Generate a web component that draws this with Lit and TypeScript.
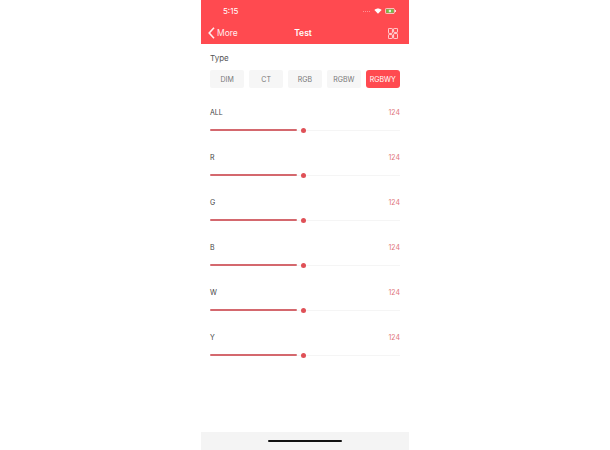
import { LitElement, html, css, svg } from "lit";
import { customElement } from "lit/decorators.js";

const TYPES = ["DIM", "CT", "RGB", "RGBW", "RGBWY"];
const CHANNELS = ["ALL", "R", "G", "B", "W", "Y"];

@customElement("app-root")
export class AppRoot extends LitElement {
  static styles = css`
    :host {
      display: flex;
      justify-content: center;
      width: 610px;
      height: 450px;
      background: #fff;
      font-family: "Inter", "Liberation Sans", sans-serif;
      overflow: hidden;
    }
    .phone {
      width: 208px;
      height: 450px;
      display: flex;
      flex-direction: column;
      background: #fff;
    }
    .head {
      background: #ff4a50;
      height: 44px;
      color: #fff;
      display: flex;
      flex-direction: column;
      flex: none;
    }
    .status {
      height: 22px;
      display: flex;
      align-items: center;
      justify-content: space-between;
      padding: 0 13px 0 22px;
      font-size: 8px;
      font-weight: 400;
    }
    .status-icons {
      display: flex;
      align-items: center;
      gap: 3px;
    }
    .dots {
      display: flex;
      gap: 1px;
      margin-right: 1px;
    }
    .dots i {
      width: 1px;
      height: 1px;
      background: #ffffff66;
    }
    .nav {
      height: 22px;
      display: grid;
      grid-template-columns: 1fr auto 1fr;
      align-items: center;
      padding: 0 11px 0 7px;
    }
    .back {
      display: flex;
      align-items: center;
      gap: 2px;
      font-size: 8.5px;
      font-weight: 400;
      opacity: 0.9;
    }
    .title {
      font-size: 8.5px;
      font-weight: 600;
    }
    .grid-icon {
      justify-self: end;
      display: block;
    }
    .content {
      flex: 1;
      padding: 9px 9px 0 9px;
    }
    .label {
      font-size: 8px;
      line-height: 10px;
      color: #555;
    }
    .types {
      display: grid;
      grid-template-columns: repeat(5, 1fr);
      gap: 4.5px;
      margin-top: 7px;
      margin-bottom: 14px;
    }
    .type {
      height: 18px;
      border-radius: 2px;
      background: #f6f6f6;
      color: #777;
      font-size: 7px;
      display: flex;
      align-items: center;
      justify-content: center;
    }
    .type.on {
      background: #ff4a50;
      color: #fff;
      border-radius: 3px;
    }
    .channel {
      height: 45px;
      box-sizing: border-box;
      padding-top: 5px;
    }
    .row {
      display: flex;
      justify-content: space-between;
      align-items: center;
      height: 10px;
    }
    .name {
      font-size: 7px;
      color: #444;
    }
    .value {
      font-size: 7px;
      color: #e0767a;
    }
    .slider {
      position: relative;
      margin-top: 10px;
      height: 6px;
      display: flex;
      align-items: center;
    }
    .rail {
      height: 1px;
      flex: 1;
      background: #f5f5f5;
    }
    .fill {
      height: 2px;
      width: 87px;
      background: #d4686e;
      border-radius: 1px;
    }
    .thumb {
      position: absolute;
      left: 91px;
      top: 0.5px;
      width: 5px;
      height: 5px;
      border-radius: 50%;
      background: #df5157;
    }
    .foot {
      flex: none;
      height: 18px;
      background: #f4f4f4;
      display: flex;
      align-items: center;
      justify-content: center;
    }
    .home {
      width: 74px;
      height: 2.5px;
      border-radius: 2px;
      background: #111;
    }
  `;

  private wifi() {
    return svg`<svg width="8" height="6" viewBox="0 0 9 7"><path d="M4.5 6.6 0.3 2.4C2.7 0 6.3 0 8.7 2.4Z" fill="#fff"/></svg>`;
  }

  private battery() {
    return svg`<svg width="11" height="6" viewBox="0 0 11 6"><rect x=".4" y=".4" width="9" height="5.2" rx="1.2" fill="none" stroke="#fff" stroke-width=".7"/><rect x="1.2" y="1.2" width="7.4" height="3.6" fill="#6fbf4a"/><rect x="3.8" y="1.8" width="2.2" height="2.4" fill="#fff" opacity=".8"/><rect x="10" y="2" width=".8" height="2" fill="#fff"/></svg>`;
  }

  private chevron() {
    return svg`<svg width="7" height="12" viewBox="0 0 7 12"><path d="M6 .8 1.2 6 6 11.2" fill="none" stroke="#fff" stroke-width="1.6"/></svg>`;
  }

  private gridIcon() {
    return svg`<svg class="grid-icon" width="10" height="11" viewBox="0 0 10 11" fill="none" stroke="#fff" stroke-width=".8"><rect x=".4" y=".4" width="4" height="5" rx=".8"/><rect x="5.6" y=".4" width="4" height="4" rx=".8"/><rect x=".4" y="6.6" width="4" height="4" rx=".8"/><rect x="5.6" y="5.6" width="4" height="5" rx=".8"/></svg>`;
  }

  render() {
    return html`
      <div class="phone">
        <div class="head">
          <div class="status">
            <span>5:15</span>
            <span class="status-icons"
              ><span class="dots"><i></i><i></i><i></i><i></i></span>${this.wifi()}${this.battery()}</span
            >
          </div>
          <div class="nav">
            <span class="back">${this.chevron()}More</span>
            <span class="title">Test</span>
            ${this.gridIcon()}
          </div>
        </div>
        <div class="content">
          <div class="label">Type</div>
          <div class="types">
            ${TYPES.map(
              (t) =>
                html`<div class="type ${t === "RGBWY" ? "on" : ""}">${t}</div>`
            )}
          </div>
          ${CHANNELS.map(
            (c) => html`
              <div class="channel">
                <div class="row">
                  <span class="name">${c}</span>
                  <span class="value">124</span>
                </div>
                <div class="slider">
                  <div class="fill"></div>
                  <div class="rail"></div>
                  <div class="thumb"></div>
                </div>
              </div>
            `
          )}
        </div>
        <div class="foot"><div class="home"></div></div>
      </div>
    `;
  }
}
